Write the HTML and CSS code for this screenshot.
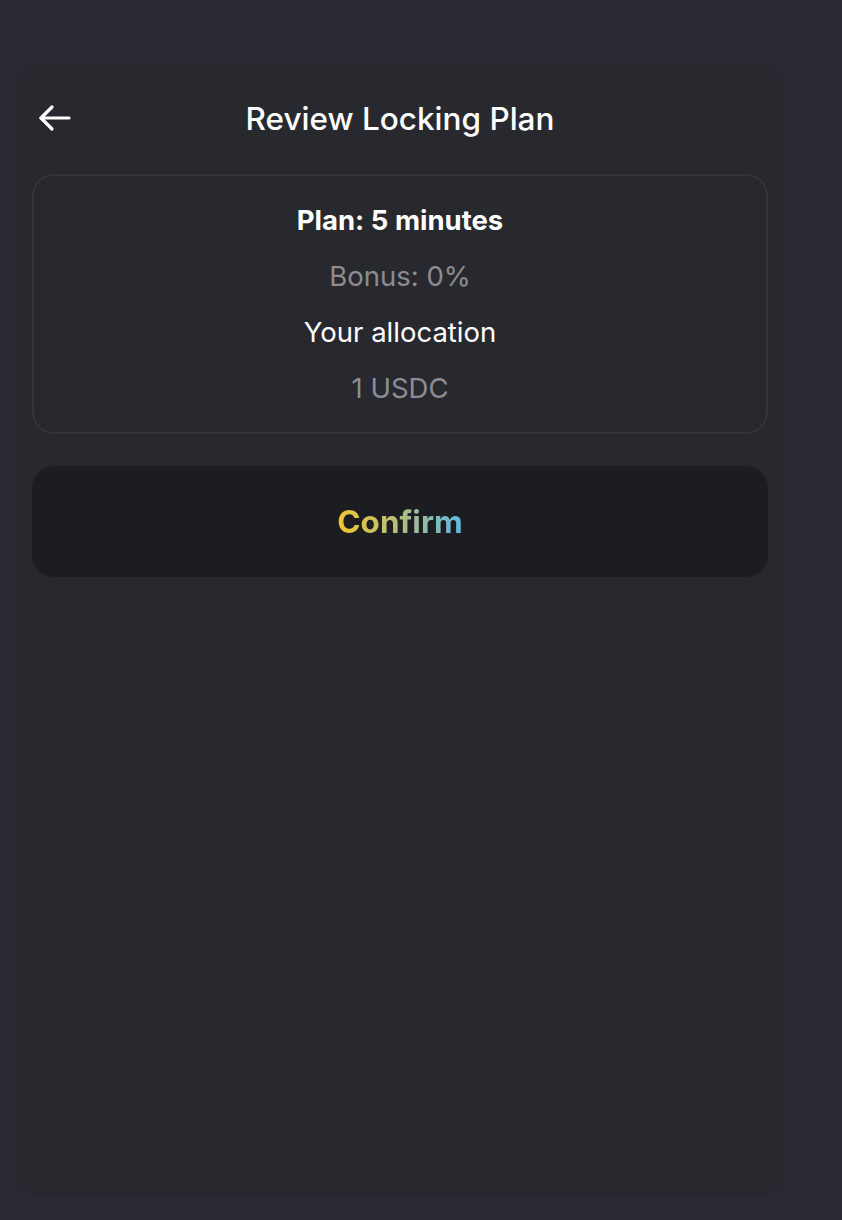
FILE: index.html
```html
<!DOCTYPE html>
<html>
<head>
<meta charset="utf-8">
<link rel="stylesheet" href="styles.css">
</head>
<body>
<div class="panel">
  <header class="header">
    <button class="back" aria-label="Back">
      <svg width="34" height="34" viewBox="0 0 34 34" fill="none" stroke="#ffffff" stroke-width="3.2" stroke-linecap="round" stroke-linejoin="round">
        <path d="M32 17H4"/>
        <path d="M15 6L4 17L15 28"/>
      </svg>
    </button>
    <h1 class="title">Review Locking Plan</h1>
  </header>
  <section class="card">
    <div class="line strong">Plan: 5 minutes</div>
    <div class="line muted">Bonus: 0%</div>
    <div class="line">Your allocation</div>
    <div class="line muted">1 USDC</div>
  </section>
  <button class="confirm"><span class="grad">Confirm</span></button>
</div>
</body>
</html>
```
FILE: styles.css
```css
html, body {
  margin: 0;
  padding: 0;
  background: #2a2a34;
  font-family: Inter, "Noto Sans", sans-serif;
}
body {
  padding: 62px 58px 23px 16px;
}
.panel {
  width: 768px;
  height: 1135px;
  box-sizing: border-box;
  background: #28292f;
  border-radius: 22px;
  padding: 0 16px;
  display: flex;
  flex-direction: column;
}
.header {
  position: relative;
  height: 112px;
  display: flex;
  align-items: center;
  justify-content: center;
}
.back {
  position: absolute;
  left: 5px;
  top: 39px;
  background: none;
  border: 0;
  padding: 0;
  width: 34px;
  height: 34px;
  cursor: pointer;
}
.back svg { display: block; }
.title {
  margin: 0;
  font-size: 31.5px;
  font-weight: 500;
  color: #ffffff;
}
.card {
  border: 2px solid #35363c;
  border-radius: 22px;
  padding: 16px 0 16px;
  display: flex;
  flex-direction: column;
  align-items: center;
}
.line {
  height: 56px;
  line-height: 56px;
  font-size: 27.5px;
  color: #ffffff;
}
.strong { font-weight: 700; }
.muted { color: #8c8c92; }
.confirm {
  margin-top: 32px;
  height: 111px;
  border: 0;
  border-radius: 22px;
  background: #1c1d21;
  display: flex;
  align-items: center;
  justify-content: center;
  font-family: Inter, "Noto Sans", sans-serif;
  font-size: 31.5px;
  font-weight: 700;
  cursor: pointer;
}
.grad {
  background: linear-gradient(90deg, #f2c630 0%, #b9bf72 45%, #5db8e6 100%);
  -webkit-background-clip: text;
  background-clip: text;
  color: transparent;
}
```
